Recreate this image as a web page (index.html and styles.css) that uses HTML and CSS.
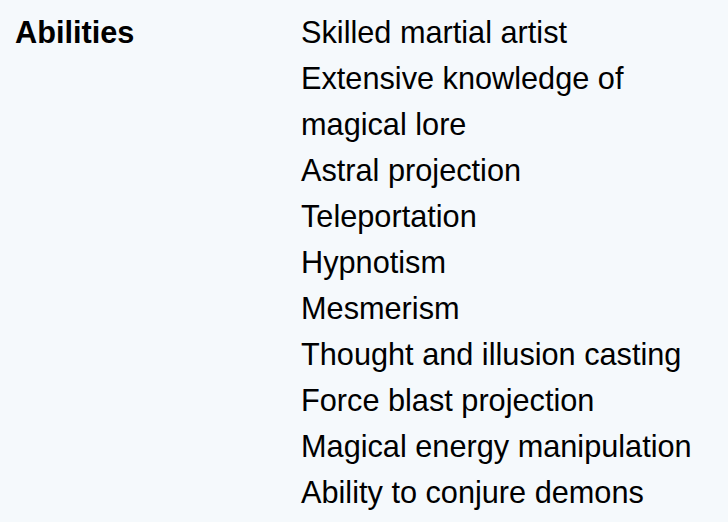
FILE: index.html
```html
<!DOCTYPE html>
<html>
<head>
<meta charset="utf-8">
<link rel="stylesheet" href="styles.css">
</head>
<body>
<div class="infobox">
  <div class="label">Abilities</div>
  <div class="data">
    <div>Skilled martial artist</div>
    <div>Extensive knowledge of magical lore</div>
    <div>Astral projection</div>
    <div>Teleportation</div>
    <div>Hypnotism</div>
    <div>Mesmerism</div>
    <div>Thought and illusion casting</div>
    <div>Force blast projection</div>
    <div>Magical energy manipulation</div>
    <div>Ability to conjure demons</div>
  </div>
</div>
</body>
</html>
```
FILE: styles.css
```css
html, body {
  margin: 0;
  padding: 0;
  background: #f5f9fc;
}
body {
  width: 728px;
  height: 522px;
  overflow: hidden;
}
.infobox {
  display: grid;
  grid-template-columns: 286px 1fr;
  padding: 10px 0 0 15px;
  font-family: "Liberation Sans", Arial, sans-serif;
  font-size: 30.7px;
  line-height: 46px;
  color: #000;
}
.label {
  font-weight: bold;
}
```
